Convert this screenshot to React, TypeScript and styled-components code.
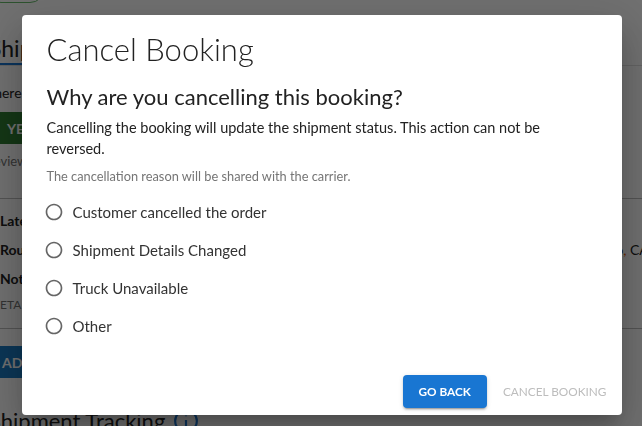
import React from 'react';
import styled, { createGlobalStyle } from 'styled-components';

const GlobalStyle = createGlobalStyle`
  html, body {
    margin: 0;
    padding: 0;
    width: 642px;
    height: 426px;
    overflow: hidden;
    background: #ffffff;
  }
  body {
    font-family: 'Lato', 'Liberation Sans', sans-serif;
    color: #212121;
  }
`;

/* ---------- page underneath the dialog ---------- */

const Page = styled.div`
  width: 700px;
  margin-left: -14px;
  display: flex;
  flex-direction: column;
`;

const StatusChip = styled.div`
  margin-top: -27px;
  width: 57px;
  height: 28px;
  border: 1px solid #66bb6a;
  border-radius: 16px;
`;

const TabBar = styled.div`
  margin-top: 27px;
  height: 35px;
  display: flex;
  border-bottom: 1px solid #e0e0e0;
`;

const Tab = styled.div`
  padding: 4px 3px 0;
  font-size: 23px;
  line-height: 28px;
  color: #212121;
  border-bottom: 2px solid #1976d2;
`;

const Prompt = styled.div`
  margin-top: 17px;
  font-size: 14px;
  line-height: 20px;
`;

const PageButton = styled.div<{ $color: string; $top: number; $indent: number }>`
  align-self: flex-start;
  margin-top: ${({ $top }) => $top}px;
  margin-left: ${({ $indent }) => $indent}px;
  height: 32px;
  padding: 0 16px;
  display: flex;
  align-items: center;
  background: ${({ $color }) => $color};
  color: #ffffff;
  font-size: 14px;
  font-weight: 700;
  border-radius: 4px;
`;

const Hint = styled.div`
  margin-top: 8px;
  font-size: 13px;
  line-height: 18px;
  color: #757575;
`;

const Divider = styled.div<{ $top: number }>`
  margin-top: ${({ $top }) => $top}px;
  height: 1px;
  background: #bdbdbd;
`;

const Details = styled.div`
  margin-top: 11px;
  padding-left: 14px;
  display: flex;
  flex-direction: column;
  gap: 7px;
`;

const DetailRow = styled.div`
  display: grid;
  grid-template-columns: 1fr 110px;
  font-size: 14px;
  line-height: 22px;

  b {
    font-weight: 700;
  }
`;

const Muted = styled.div`
  font-size: 12px;
  line-height: 16px;
  color: #757575;
`;

const Comma = styled.span`
  color: #e65100;
`;

const SectionTitle = styled.div`
  margin-top: 28px;
  padding-left: 3px;
  display: flex;
  align-items: center;
  gap: 8px;
  font-size: 22px;
  line-height: 30px;
`;

/* ---------- dialog ---------- */

const Backdrop = styled.div`
  position: fixed;
  inset: 0;
  background: rgba(0, 0, 0, 0.56);
  display: flex;
  justify-content: center;
  align-items: flex-start;
  padding-top: 15px;
`;

const Dialog = styled.div`
  width: 600px;
  height: 400px;
  margin-left: 1px;
  box-sizing: border-box;
  background: #ffffff;
  border-radius: 4px;
  box-shadow: 0 11px 15px -7px rgba(0, 0, 0, 0.2), 0 24px 38px 3px rgba(0, 0, 0, 0.14),
    0 9px 46px 8px rgba(0, 0, 0, 0.12);
  display: flex;
  flex-direction: column;
  padding: 14px 7px 7px 25px;
`;

const Title = styled.h2`
  margin: 0;
  font-size: 31px;
  font-weight: 300;
  line-height: 40px;
  color: #222222;
`;

const Question = styled.h3`
  margin: 14px 0 0;
  font-size: 22px;
  font-weight: 400;
  line-height: 28px;
  color: #222222;
`;

const Body = styled.p`
  margin: 6px 0 0;
  max-width: 495px;
  font-size: 14.5px;
  line-height: 21px;
  color: #222222;
`;

const Note = styled.p`
  margin: 8px 0 0;
  font-size: 12.8px;
  line-height: 18px;
  color: #757575;
`;

const Options = styled.div`
  margin-top: 17px;
  display: flex;
  flex-direction: column;
  gap: 18px;
`;

const Option = styled.label`
  display: flex;
  align-items: center;
  gap: 9px;
  margin-left: -3px;
  font-size: 15px;
  line-height: 20px;
  color: #333333;
  cursor: pointer;
`;

const RadioIcon = styled.svg`
  width: 20px;
  height: 20px;
  fill: #666666;
  flex: none;
`;

const Actions = styled.div`
  margin-top: auto;
  display: flex;
  justify-content: flex-end;
  align-items: center;
  gap: 8px;
`;

const ActionButton = styled.button<{ $primary?: boolean }>`
  height: 33px;
  padding: 0 ${({ $primary }) => ($primary ? 16 : 8)}px;
  border: none;
  border-radius: 4px;
  font-family: inherit;
  font-size: 11.8px;
  text-transform: uppercase;
  background: ${({ $primary }) => ($primary ? '#1976d2' : 'transparent')};
  color: ${({ $primary }) => ($primary ? '#ffffff' : '#bdbdbd')};
  box-shadow: ${({ $primary }) =>
    $primary ? '0 3px 1px -2px rgba(0,0,0,0.2), 0 2px 2px 0 rgba(0,0,0,0.14), 0 1px 5px 0 rgba(0,0,0,0.12)' : 'none'};
  font-weight: ${({ $primary }) => ($primary ? 700 : 400)};
  cursor: ${({ $primary }) => ($primary ? 'pointer' : 'default')};
`;

const reasons = [
  'Customer cancelled the order',
  'Shipment Details Changed',
  'Truck Unavailable',
  'Other',
];

const Radio = () => (
  <RadioIcon viewBox="0 0 24 24">
    <path d="M12 2C6.48 2 2 6.48 2 12s4.48 10 10 10 10-4.48 10-10S17.52 2 12 2zm0 18c-4.42 0-8-3.58-8-8s3.58-8 8-8 8 3.58 8 8-3.58 8-8 8z" />
  </RadioIcon>
);

const InfoIcon = () => (
  <svg width="26" height="26" viewBox="0 0 24 24" fill="none" stroke="#1976d2" strokeWidth="2">
    <circle cx="12" cy="12" r="10" />
    <path d="M12 11v6M12 7v.5" />
  </svg>
);

const App = () => {
  return (
    <>
      <GlobalStyle />
      <Page>
        <StatusChip />
        <TabBar>
          <Tab>Shipment Details</Tab>
        </TabBar>
        <Prompt>There is a pending status update</Prompt>
        <PageButton $color="#2e7d32" $top={9} $indent={5}>
          YES
        </PageButton>
        <Hint>Review the latest ping</Hint>
        <Divider $top={28} />
        <Details>
          <DetailRow>
            <b>Latest Update:</b>
          </DetailRow>
          <DetailRow>
            <b>Route:</b>
            <span>
              Ontario<Comma>,</Comma> CA
            </span>
          </DetailRow>
          <DetailRow>
            <b>Notes:</b>
          </DetailRow>
          <Muted>ETA calculated from last ping</Muted>
        </Details>
        <Divider $top={15} />
        <PageButton $color="#1a7bc4" $top={17} $indent={0}>
          ADD NOTE
        </PageButton>
        <SectionTitle>
          Shipment Tracking <InfoIcon />
        </SectionTitle>
      </Page>

      <Backdrop>
        <Dialog>
          <Title>Cancel Booking</Title>
          <Question>Why are you cancelling this booking?</Question>
          <Body>
            Cancelling the booking will update the shipment status. This action can not be reversed.
          </Body>
          <Note>The cancellation reason will be shared with the carrier.</Note>
          <Options>
            {reasons.map((reason) => (
              <Option key={reason}>
                <Radio />
                {reason}
              </Option>
            ))}
          </Options>
          <Actions>
            <ActionButton $primary>Go Back</ActionButton>
            <ActionButton disabled>Cancel Booking</ActionButton>
          </Actions>
        </Dialog>
      </Backdrop>
    </>
  );
};

export default App;
